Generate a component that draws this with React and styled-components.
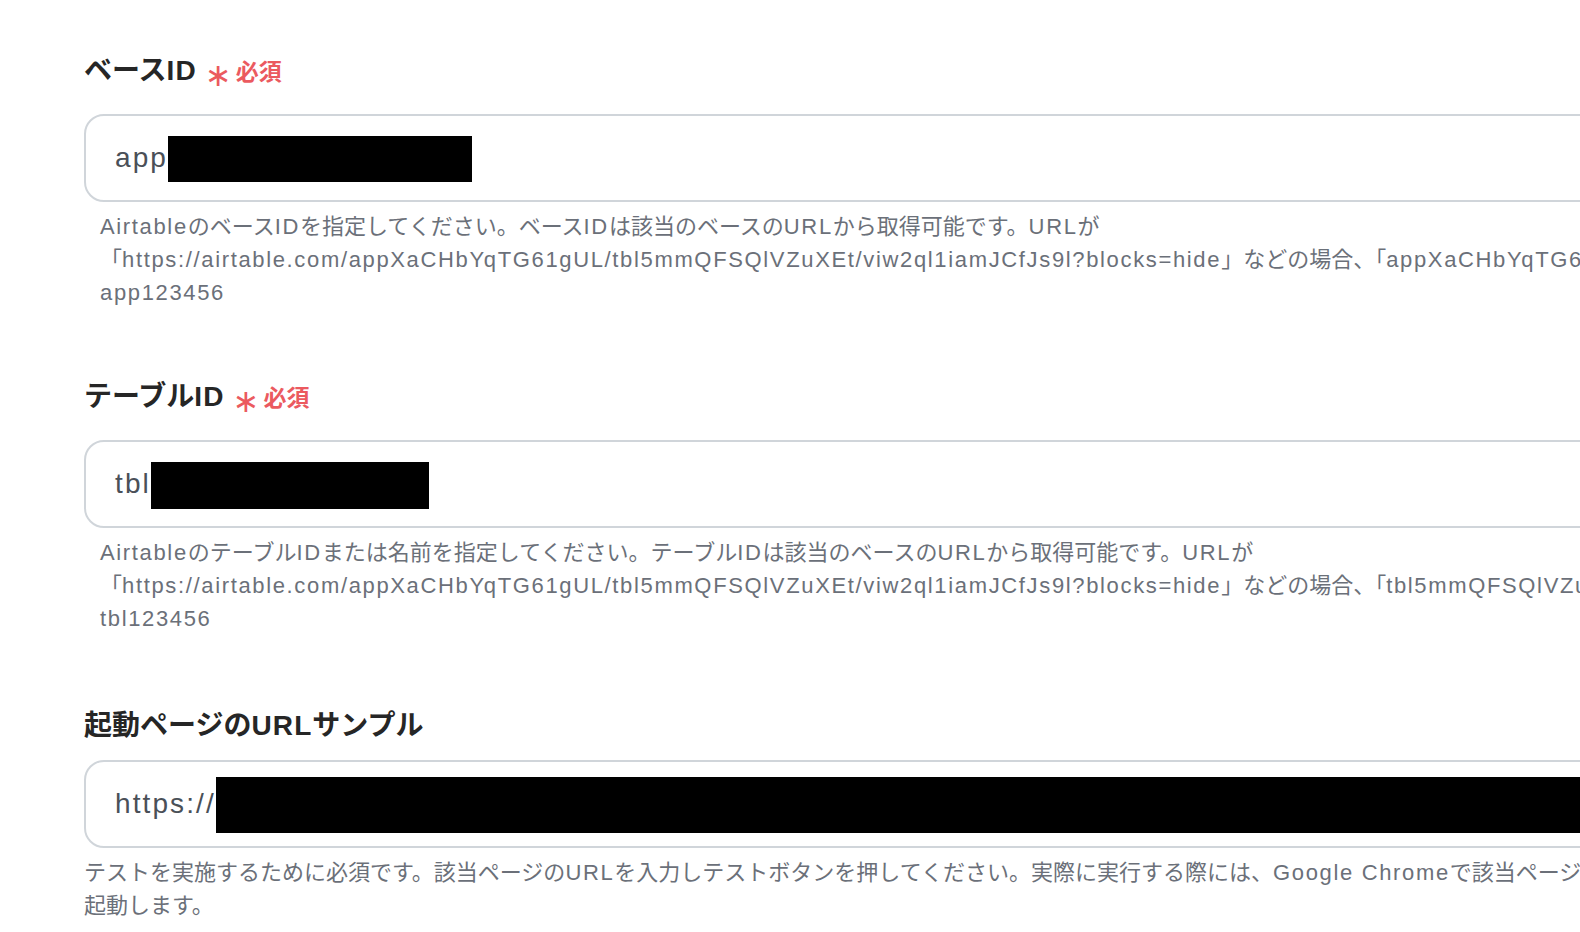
import React from 'react'
import styled, { createGlobalStyle } from 'styled-components'

const GlobalStyle = createGlobalStyle`
  html, body {
    margin: 0;
    padding: 0;
    background: #ffffff;
    overflow: hidden;
  }
  body {
    font-family: "Liberation Sans", "Noto Sans CJK JP", sans-serif;
  }
`

const Page = styled.div`
  width: 1580px;
  height: 932px;
  box-sizing: border-box;
  padding: 50px 0 0 84px;
  overflow: hidden;
`

const Form = styled.div`
  width: 1720px;
  display: flex;
  flex-direction: column;
  gap: 67px;
`

const Field = styled.div`
  display: flex;
  flex-direction: column;
`

const LabelRow = styled.div`
  display: flex;
  align-items: ${p => (p.$required ? 'center' : 'flex-end')};
  gap: 8px;
  height: ${p => (p.$required ? 42 : 36)}px;
`

const Label = styled.span`
  font-size: 28px;
  font-weight: 700;
  color: #262626;
  line-height: 1;
  margin-bottom: ${p => (p.$required ? 0 : -2)}px;
`

const Required = styled.span`
  display: flex;
  align-items: center;
  gap: 4px;
  color: #eb5a5f;
  font-size: 23px;
  font-weight: 700;
  line-height: 1;
  margin-top: 2px;
`

const Star = styled.span`
  font-family: "DejaVu Sans", sans-serif;
  font-size: 32px;
  font-weight: 400;
  line-height: 1;
  position: relative;
  top: 3px;
`

const Latin = styled.span`
  letter-spacing: ${p => p.$spacing || 0.075}em;
`

const InputBox = styled.div`
  margin-top: 22px;
  height: 88px;
  box-sizing: border-box;
  border: 2px solid #d0d5da;
  border-radius: 20px;
  padding-left: 29px;
  display: flex;
  align-items: center;
  font-size: 28px;
  color: #4a5058;
  white-space: nowrap;
  overflow: hidden;
`

const Redacted = styled.span`
  display: inline-block;
  background: #000000;
  width: ${p => p.$w}px;
  height: ${p => p.$h}px;
  flex-shrink: 0;
  margin-top: 2px;
`

const Help = styled.div`
  margin-top: 8px;
  padding-left: ${p => (p.$indent ? 16 : 0)}px;
  font-size: 22px;
  line-height: 33px;
  color: #6b7079;
`

const HelpLine = styled.div`
  white-space: nowrap;
`

// latin runs get a little tracking so they take the width of the original font
const Txt = ({ children, spacing }) => {
  const parts = children.split(/([\x21-\x7E][\x20-\x7E]*[\x21-\x7E]|[\x21-\x7E])/g)
  return parts.map((p, i) =>
    i % 2 === 1 ? <Latin key={i} $spacing={spacing}>{p}</Latin> : p
  )
}

const fields = [
  {
    label: 'ベースID',
    required: true,
    prefix: 'app',
    redact: { w: 304, h: 46 },
    indent: true,
    help: [
      'AirtableのベースIDを指定してください。ベースIDは該当のベースのURLから取得可能です。URLが',
      '「https://airtable.com/appXaCHbYqTG61gUL/tbl5mmQFSQlVZuXEt/viw2ql1iamJCfJs9l?blocks=hide」などの場合、「appXaCHbYqTG61gUL」の部分がベースIDです。',
      'app123456',
    ],
  },
  {
    label: 'テーブルID',
    required: true,
    prefix: 'tbl',
    redact: { w: 278, h: 47 },
    indent: true,
    help: [
      'AirtableのテーブルIDまたは名前を指定してください。テーブルIDは該当のベースのURLから取得可能です。URLが',
      '「https://airtable.com/appXaCHbYqTG61gUL/tbl5mmQFSQlVZuXEt/viw2ql1iamJCfJs9l?blocks=hide」などの場合、「tbl5mmQFSQlVZuXEt」の部分がテーブルIDです。',
      'tbl123456',
    ],
  },
  {
    label: '起動ページのURLサンプル',
    required: false,
    prefix: 'https://',
    redact: { w: 1500, h: 56 },
    indent: false,
    help: [
      'テストを実施するために必須です。該当ページのURLを入力しテストボタンを押してください。実際に実行する際には、Google Chromeで該当ページを開いた状態で拡張機能から',
      '起動します。',
    ],
  },
]

export default () => {
  return (
    <Page>
      <GlobalStyle />
      <Form>
        {fields.map((f, i) => (
          <Field key={i}>
            <LabelRow $required={f.required}>
              <Label $required={f.required}><Txt spacing={0.04}>{f.label}</Txt></Label>
              {f.required && (
                <Required>
                  <Star>∗</Star>
                  必須
                </Required>
              )}
            </LabelRow>
            <InputBox>
              <Latin>{f.prefix}</Latin>
              <Redacted $w={f.redact.w} $h={f.redact.h} />
            </InputBox>
            <Help $indent={f.indent}>
              {f.help.map((line, j) => (
                <HelpLine key={j}><Txt>{line}</Txt></HelpLine>
              ))}
            </Help>
          </Field>
        ))}
      </Form>
    </Page>
  )
}
